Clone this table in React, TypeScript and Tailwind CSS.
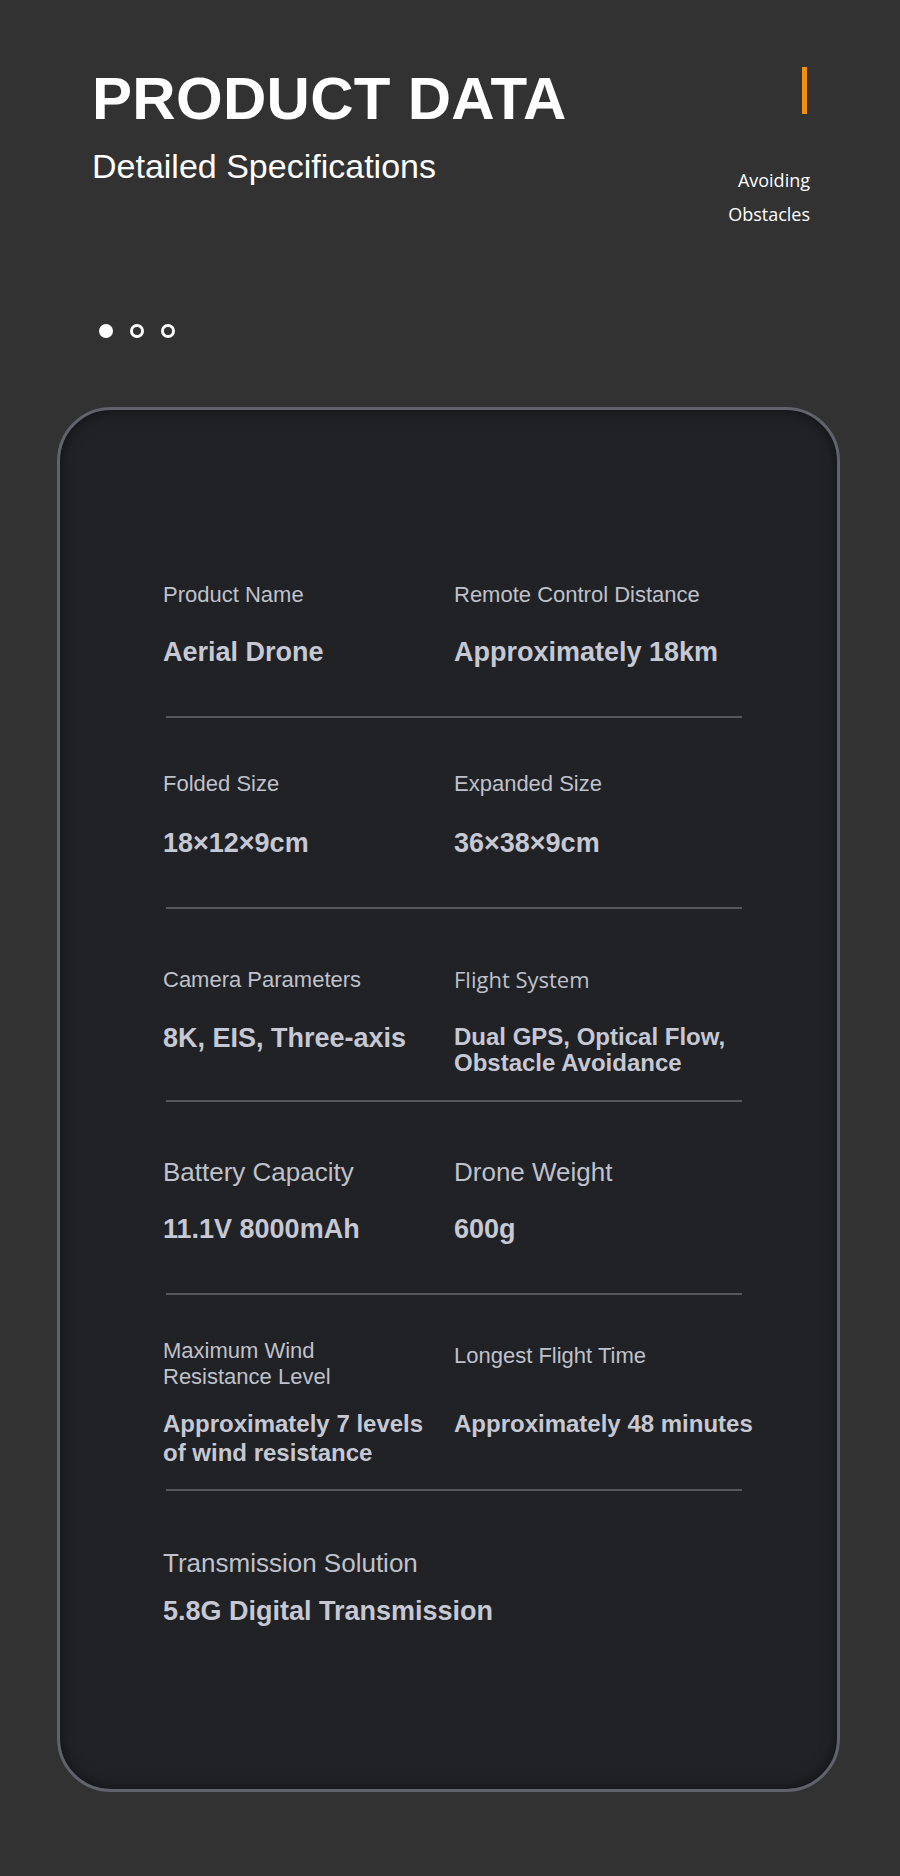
import React from "react";

const sans = { fontFamily: '"Liberation Sans", Arial, sans-serif' };

function Label({ children, big, open }: { children: React.ReactNode; big?: boolean; open?: boolean }) {
  return (
    <div
      className={
        (big ? "text-[26px] leading-[30px] " : "text-[22px] leading-[26px] ") +
        (open ? "font-['Open_Sans',sans-serif] " : "font-['Liberation_Sans',Arial,sans-serif] ") +
        "text-[#bfc1cb]"
      }
    >
      {children}
    </div>
  );
}

function Value({ children, lh, small }: { children: React.ReactNode; lh?: string; small?: boolean }) {
  return (
    <div
      className={
        "font-['Liberation_Sans',Arial,sans-serif] font-bold text-[#c6c8d4] " +
        (small ? "text-[24px] " : "text-[27px] ") +
        (lh ?? "leading-[30px]")
      }
    >
      {children}
    </div>
  );
}

function Divider() {
  return <div className="ml-[3px] w-[576px] h-[2px] bg-[#55575d]" />;
}

export default function App() {
  return (
    <div className="w-[900px] min-h-[1876px] bg-[#323232] overflow-hidden" style={sans}>
      {/* Header */}
      <div className="flex justify-between pl-[92px] pr-[90px] pt-[67px]">
        <div className="pt-[2px]">
          <h1 className="font-['Liberation_Sans',Arial,sans-serif] font-bold text-[60px] leading-[60px] text-white tracking-[0.005em]">
            PRODUCT DATA
          </h1>
          <div className="mt-[20px] font-['Liberation_Sans',Arial,sans-serif] text-[34px] leading-[34px] text-white">
            Detailed Specifications
          </div>
        </div>
        <div className="flex flex-col items-end">
          <div className="w-[5px] h-[47px] bg-[#f0900f] mr-[3px]" />
          <div className="mt-[49px] font-['Open_Sans',sans-serif] text-[18px] leading-[34px] text-white text-right">
            <div>Avoiding</div>
            <div>Obstacles</div>
          </div>
        </div>
      </div>

      {/* Dots */}
      <div className="flex items-center gap-[17px] pl-[99px] mt-[93px]">
        <span className="w-[14px] h-[14px] rounded-full bg-white" />
        <span className="w-[14px] h-[14px] rounded-full border-[3px] border-white" />
        <span className="w-[14px] h-[14px] rounded-full border-[3px] border-white" />
      </div>

      {/* Card */}
      <div className="ml-[57px] mt-[69px] w-[783px] h-[1385px] rounded-[54px] border-[3px] border-[#60626c] bg-[#212226] shadow-[inset_0_0_14px_rgba(0,0,0,0.55)] pl-[103px]">
        {/* Row 1 */}
        <div className="pt-[172px] pb-[49px] grid grid-cols-[291px_1fr]">
          <div>
            <Label>Product Name</Label>
            <div className="mt-[29px]"><Value>Aerial Drone</Value></div>
          </div>
          <div>
            <Label>Remote Control Distance</Label>
            <div className="mt-[29px]"><Value>Approximately 18km</Value></div>
          </div>
        </div>
        <Divider />

        {/* Row 2 */}
        <div className="pt-[53px] pb-[49px] grid grid-cols-[291px_1fr]">
          <div>
            <Label>Folded Size</Label>
            <div className="mt-[31px]"><Value>18×12×9cm</Value></div>
          </div>
          <div>
            <Label>Expanded Size</Label>
            <div className="mt-[31px]"><Value>36×38×9cm</Value></div>
          </div>
        </div>
        <Divider />

        {/* Row 3 */}
        <div className="pt-[58px] pb-[24px] grid grid-cols-[291px_1fr]">
          <div>
            <Label>Camera Parameters</Label>
            <div className="mt-[32px]"><Value lh="leading-[26px]">8K, EIS, Three-axis</Value></div>
          </div>
          <div>
            <div className="-mt-[1px] h-[26px]">
              <Label open>Flight System</Label>
            </div>
            <div className="mt-[32px]">
              <Value small lh="leading-[26px]">
                Dual GPS, Optical Flow,
                <br />
                Obstacle Avoidance
              </Value>
            </div>
          </div>
        </div>
        <Divider />

        {/* Row 4 */}
        <div className="pt-[55px] pb-[49px] grid grid-cols-[291px_1fr]">
          <div>
            <Label big>Battery Capacity</Label>
            <div className="mt-[27px]"><Value>11.1V 8000mAh</Value></div>
          </div>
          <div>
            <Label big>Drone Weight</Label>
            <div className="mt-[27px]"><Value>600g</Value></div>
          </div>
        </div>
        <Divider />

        {/* Row 5 */}
        <div className="pt-[43px] pb-[22px] grid grid-cols-[291px_1fr]">
          <div>
            <Label>
              Maximum Wind
              <br />
              Resistance Level
            </Label>
            <div className="mt-[19px]">
              <Value small lh="leading-[29px]">
                Approximately 7 levels
                <br />
                of wind resistance
              </Value>
            </div>
          </div>
          <div>
            <div className="pt-[5px] h-[52px]">
              <Label>Longest Flight Time</Label>
            </div>
            <div className="mt-[19px]">
              <Value small lh="leading-[29px]">Approximately 48 minutes</Value>
            </div>
          </div>
        </div>
        <Divider />

        {/* Row 6 */}
        <div className="pt-[57px]">
          <Label big>Transmission Solution</Label>
          <div className="mt-[18px]"><Value>5.8G Digital Transmission</Value></div>
        </div>
      </div>
      <div className="h-[86px]" />
    </div>
  );
}
